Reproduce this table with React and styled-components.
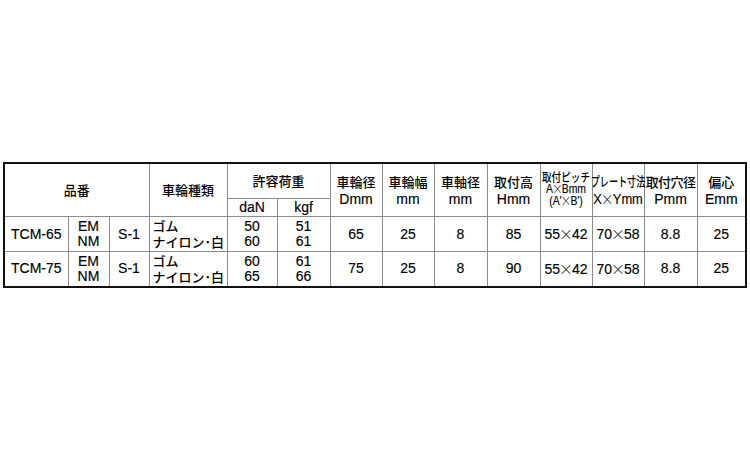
import styled, { createGlobalStyle } from 'styled-components';

const GlobalStyle = createGlobalStyle`
  html, body {
    margin: 0;
    padding: 0;
    background: #fff;
  }
`;

const widths = [64, 41, 40, 78, 50, 53, 52, 52, 53, 53, 52, 52, 53, 49];

const rows = [
  {
    code: 'TCM-65',
    dan: ['50', '60'],
    kgf: ['51', '61'],
    d: '65',
    h: '85',
  },
  {
    code: 'TCM-75',
    dan: ['60', '65'],
    kgf: ['61', '66'],
    d: '75',
    h: '90',
  },
];

const Cross = () => <X>×</X>;

export default function App() {
  return (
    <Page>
      <GlobalStyle />
      <Table>
        <colgroup>
          {widths.map((w, i) => (
            <col key={i} style={{ width: w }} />
          ))}
        </colgroup>
        <thead>
          <tr>
            <Head colSpan={3} rowSpan={2}><Ja>品番</Ja></Head>
            <Head rowSpan={2}><Ja>車輪種類</Ja></Head>
            <Head colSpan={2} $h={34}><Ja>許容荷重</Ja></Head>
            <Head rowSpan={2}><Ja>車輪径</Ja><br />Dmm</Head>
            <Head rowSpan={2}><Ja>車輪幅</Ja><br />mm</Head>
            <Head rowSpan={2}><Ja>車軸径</Ja><br />mm</Head>
            <Head rowSpan={2}><Ja>取付高</Ja><br />Hmm</Head>
            <Head rowSpan={2}>
              <Squeeze $scale={0.8}>
                <Tight $ja>取付ピッチ</Tight>
                <Tight>A<Cross />Bmm</Tight>
                <Tight>(A'<Cross />B')</Tight>
              </Squeeze>
            </Head>
            <Head rowSpan={2}>
              <Squeeze $scale={0.7}><Ja>プレート寸法</Ja></Squeeze>
              <br />
              <Squeeze $scale={0.92}>X<Cross />Ymm</Squeeze>
            </Head>
            <Head rowSpan={2}><Ja $narrow>取付穴径</Ja><br />Pmm</Head>
            <Head rowSpan={2}><Ja>偏心</Ja><br />Emm</Head>
          </tr>
          <tr>
            <Sub>daN</Sub>
            <Sub>kgf</Sub>
          </tr>
        </thead>
        <tbody>
          {rows.map((r) => (
            <Row key={r.code}>
              <Cell>{r.code}</Cell>
              <Cell>EM<br />NM</Cell>
              <Cell>S-1</Cell>
              <Cell $left><Ja>ゴム<br />ナイロン･白</Ja></Cell>
              <Cell>{r.dan[0]}<br />{r.dan[1]}</Cell>
              <Cell>{r.kgf[0]}<br />{r.kgf[1]}</Cell>
              <Cell>{r.d}</Cell>
              <Cell>25</Cell>
              <Cell>8</Cell>
              <Cell>{r.h}</Cell>
              <Cell>55<Cross />42</Cell>
              <Cell>70<Cross />58</Cell>
              <Cell>8.8</Cell>
              <Cell>25</Cell>
            </Row>
          ))}
        </tbody>
      </Table>
    </Page>
  );
}

const Page = styled.div`
  width: 750px;
  height: 450px;
  box-sizing: border-box;
  padding: 162px 0 0 3px;
  background: #fff;
  font-family: 'Liberation Sans', 'Noto Sans CJK JP', sans-serif;
  color: #000;
  -webkit-text-stroke: 0.15px #000;
`;

const Table = styled.table`
  width: 744px;
  table-layout: fixed;
  border-collapse: collapse;
  border: 2px solid #111;
`;

const Head = styled.th`
  height: ${(p) => (p.$h ? `${p.$h}px` : 'auto')};
  padding: 0;
  border: 1px solid #8c8c8c;
  font-weight: normal;
  font-size: 14px;
  line-height: 17px;
  text-align: center;
  vertical-align: middle;
  white-space: nowrap;
`;

const Sub = styled.th`
  height: 17px;
  padding: 0;
  border: 1px solid #8c8c8c;
  font-weight: normal;
  font-size: 14px;
  line-height: 17px;
  text-align: center;
`;

const Ja = styled.span`
  font-family: 'Noto Sans CJK JP', sans-serif;
  font-size: 13px;
  font-weight: 500;
  -webkit-text-stroke: 0;
  letter-spacing: ${(p) => (p.$narrow ? '-0.6px' : '0')};
`;

const Squeeze = styled.span`
  display: inline-block;
  transform: scaleX(${(p) => p.$scale});
  transform-origin: center;
  white-space: nowrap;
  margin: 0 -20px;
`;

const Tight = styled.span`
  display: block;
  font-size: ${(p) => (p.$ja ? '12px' : '13px')};
  line-height: 11px;
  font-family: ${(p) => (p.$ja ? "'Noto Sans CJK JP', sans-serif" : 'inherit')};
  font-weight: ${(p) => (p.$ja ? 500 : 'normal')};
  -webkit-text-stroke: ${(p) => (p.$ja ? '0' : '0.15px #000')};
`;

const X = styled.span`
  font-family: 'Noto Sans CJK JP', sans-serif;
  font-weight: 300;
  -webkit-text-stroke: 0;
  margin: 0 -1px;
`;

const Row = styled.tr`
  height: 35px;
`;

const Cell = styled.td`
  padding: 0 0 0 ${(p) => (p.$left ? '3px' : '0')};
  border: 1px solid #8c8c8c;
  font-size: 14px;
  line-height: 15px;
  text-align: ${(p) => (p.$left ? 'left' : 'center')};
  vertical-align: middle;
  white-space: nowrap;
  overflow: hidden;
`;
